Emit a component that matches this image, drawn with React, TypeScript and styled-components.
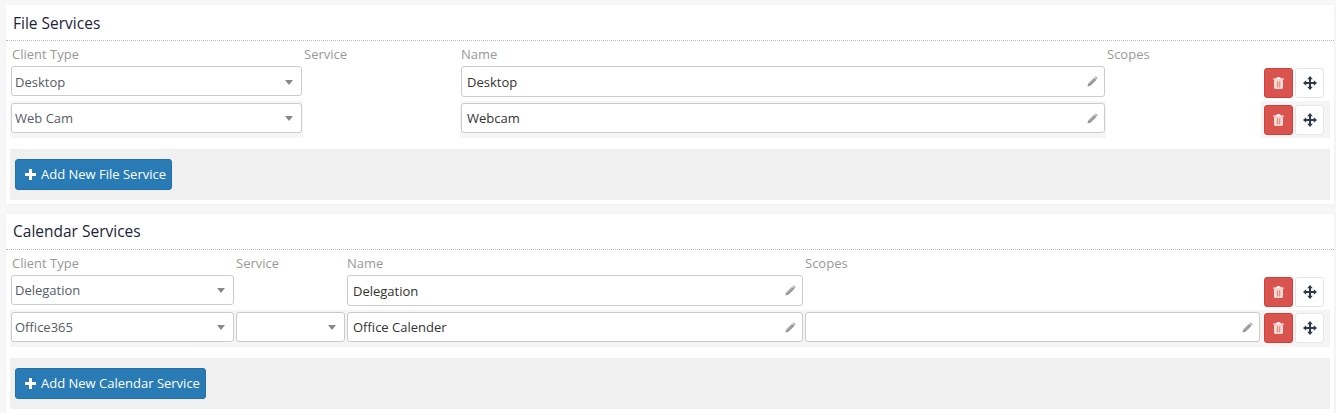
import React from "react";
import styled, { createGlobalStyle } from "styled-components";

const Global = createGlobalStyle`
  html, body { margin: 0; padding: 0; background: #f7f7f7; }
  body { font-family: "Open Sans", "Liberation Sans", sans-serif; font-size: 13px; height: 413px; overflow: hidden; }
`;

const Page = styled.div`
  display: flex;
  flex-direction: column;
  gap: 10px;
  padding: 5px 2px 0 6px;
`;

const Panel = styled.section`
  background: #fff;
  box-shadow: 0 1px 4px rgba(0, 0, 0, 0.04);
  padding-bottom: 4px;
`;

const Title = styled.h3<{ $top: number }>`
  margin: 0;
  height: 36px;
  padding: ${(p) => p.$top}px 0 0 7px;
  box-sizing: border-box;
  border-bottom: 1px dotted #bbb;
  font-size: 15.5px;
  line-height: 20px;
  font-weight: 400;
  color: #1c2438;
`;

const Grid = styled.div<{ $cols: string }>`
  display: grid;
  grid-template-columns: ${(p) => p.$cols};
  margin: 0 4px;
`;

const Head = styled.div<{ $first?: boolean }>`
  height: 24px;
  padding: 5px 0 0 ${(p) => (p.$first ? 2 : 1)}px;
  box-sizing: border-box;
  color: #999;
  font-size: 13px;
  line-height: 17px;
`;

const Cell = styled.div<{ $striped?: boolean; $tall?: boolean }>`
  height: ${(p) => (p.$tall ? 37 : 36)}px;
  padding: ${(p) => (p.$tall ? "2px 1px 0" : "1px 1px 0")};
  box-sizing: border-box;
  background: ${(p) => (p.$striped ? "#f5f5f5" : "transparent")};
  display: flex;
`;

const Control = styled.div`
  flex: 1;
  min-width: 0;
  box-sizing: border-box;
  background: #fff;
  border: 1px solid #ccc;
  border-radius: 3px;
  display: flex;
  align-items: center;
  justify-content: space-between;
  font-size: 13px;
  line-height: 18px;
`;

const SelectControl = styled(Control)<{ $drop?: boolean }>`
  height: 30px;
  padding: ${(p) => (p.$drop ? "2px" : "0")} 8px 0 3px;
  color: #555c66;
`;

const InputControl = styled(Control)<{ $short?: boolean }>`
  height: ${(p) => (p.$short ? 30 : 31)}px;
  padding: 0 6px 0 5px;
  color: #333;
`;

const Caret = styled.span`
  width: 0;
  height: 0;
  border-left: 4px solid transparent;
  border-right: 4px solid transparent;
  border-top: 5px solid #888;
`;

const Actions = styled.div<{ $top: number }>`
  display: flex;
  gap: 2px;
  padding: ${(p) => p.$top}px 0 0 2px;
`;

const IconButton = styled.button<{ $danger?: boolean }>`
  width: 29px;
  height: 30px;
  padding: 0;
  display: flex;
  align-items: center;
  justify-content: center;
  border-radius: 3px;
  border: 1px solid ${(p) => (p.$danger ? "#d43f3a" : "#e6e6e6")};
  background: ${(p) => (p.$danger ? "#d9534f" : "#fff")};
`;

const Footer = styled.div`
  margin: 11px 4px 0;
  height: 51px;
  padding: 10px 5px;
  box-sizing: border-box;
  background: #f0f0f0;
`;

const AddButton = styled.button`
  height: 31px;
  box-sizing: border-box;
  padding: 0 5px 2px 9px;
  display: inline-flex;
  align-items: center;
  gap: 5px;
  border: 1px solid #2470a5;
  border-radius: 3px;
  background: #287bb5;
  color: #fff;
  font-family: "Open Sans", "Liberation Sans", sans-serif;
  font-size: 13px;
  font-weight: 400;
`;

const PlusIcon = styled.svg`
  margin-top: 1px;
`;

const Plus = () => (
  <PlusIcon width="11" height="11" viewBox="0 0 11 11"><path d="M4 0h3v4h4v3H7v4H4V7H0V4h4z" fill="#fff" /></PlusIcon>
);
const Pencil = () => (
  <svg width="11" height="11" viewBox="0 0 12 12">
    <path d="M0.5 11.5l0.8-3.3L8 1.5l2.5 2.5-6.7 6.7z" fill="#999" />
    <path d="M1.8 8.7L8.4 2.1" stroke="#c4c4c4" strokeWidth="0.8" />
    <path d="M9 0.7a0.9 0.9 0 0 1 1.2 0l1.1 1.1a0.9 0.9 0 0 1 0 1.2l-0.5 0.5-2.3-2.3z" fill="#aaa" />
  </svg>
);
const Trash = () => (
  <svg width="11" height="12" viewBox="0 0 11 12">
    <path d="M3.8 0.3h3.4l0.5 1.2h3v1.3H0.3V1.5h3z" fill="#fff" />
    <path d="M1.2 3.2h8.6V11a0.8 0.8 0 0 1-0.8 0.8H2A0.8 0.8 0 0 1 1.2 11z" fill="#fff" />
    <path d="M2.5 4.2h6v6.4h-6z" fill="#f3c4b4" />
    <path d="M4.1 4.2h0.6v6.4h-0.6zM6.3 4.2h0.6v6.4H6.3z" fill="#dc6a62" />
  </svg>
);
const Move = () => (
  <svg width="14" height="14" viewBox="0 0 14 14" fill="#2f3a47">
    <path d="M7 0l2.8 3.2H8v2.8h2.8V4.2L14 7l-3.2 2.8V8H8v2.8h1.8L7 14l-2.8-3.2H6V8H3.2v1.8L0 7l3.2-2.8V6H6V3.2H4.2z" />
  </svg>
);

const Select = ({ value, drop }: { value?: string; drop?: boolean }) => (
  <SelectControl $drop={drop}>
    <span>{value}</span>
    <Caret />
  </SelectControl>
);
const Input = ({ value, short }: { value?: string; short?: boolean }) => (
  <InputControl $short={short}>
    <span>{value}</span>
    <Pencil />
  </InputControl>
);
const RowActions = ({ tall, top }: { tall?: boolean; top: number }) => (
  <Cell $striped={tall} $tall={tall}>
    <Actions $top={top}>
      <IconButton $danger aria-label="Delete"><Trash /></IconButton>
      <IconButton aria-label="Move"><Move /></IconButton>
    </Actions>
  </Cell>
);

export default function App() {
  return (
    <Page>
      <Global />
      <Panel>
        <Title $top={8}>File Services</Title>
        <Grid $cols="293px 157px 646px 155px 1fr">
          <Head $first>Client Type</Head>
          <Head>Service</Head>
          <Head>Name</Head>
          <Head>Scopes</Head>
          <Head />
          <Cell><Select value="Desktop" drop /></Cell>
          <Cell />
          <Cell><Input value="Desktop" /></Cell>
          <Cell />
          <RowActions top={2} />
          <Cell $striped $tall><Select value="Web Cam" /></Cell>
          <Cell $tall />
          <Cell $striped $tall><Input value="Webcam" short /></Cell>
          <Cell $tall />
          <RowActions tall top={2} />
        </Grid>
        <Footer><AddButton><Plus />Add New File Service</AddButton></Footer>
      </Panel>
      <Panel>
        <Title $top={7}>Calendar Services</Title>
        <Grid $cols="225px 111px 458px 457px 1fr">
          <Head $first>Client Type</Head>
          <Head>Service</Head>
          <Head>Name</Head>
          <Head>Scopes</Head>
          <Head />
          <Cell><Select value="Delegation" /></Cell>
          <Cell />
          <Cell><Input value="Delegation" /></Cell>
          <Cell />
          <RowActions top={2} />
          <Cell $striped $tall><Select value="Office365" /></Cell>
          <Cell $striped $tall><Select /></Cell>
          <Cell $striped $tall><Input value="Office Calender" short /></Cell>
          <Cell $striped $tall><Input short /></Cell>
          <RowActions tall top={1} />
        </Grid>
        <Footer><AddButton><Plus />Add New Calendar Service</AddButton></Footer>
      </Panel>
    </Page>
  );
}
